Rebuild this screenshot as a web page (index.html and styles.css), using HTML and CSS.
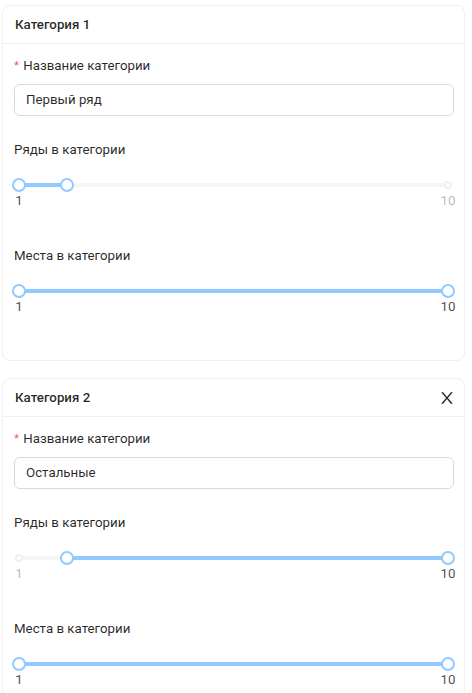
FILE: index.html
```html
<!DOCTYPE html>
<html lang="ru">
<head>
<meta charset="utf-8">
<title>Категории</title>
<link rel="stylesheet" href="styles.css">
</head>
<body>
<div class="list">
  <section class="card">
    <header class="card-head"><span class="card-title">Категория 1</span></header>
    <div class="card-body">
      <div class="form-item">
        <div class="label"><span class="req">*</span>Название категории</div>
        <div class="input">Первый ряд</div>
      </div>
      <div class="form-item">
        <div class="label">Ряды в категории</div>
        <div class="slider">
          <div class="rail"></div>
          <div class="track" style="left:0%;width:11.111%"></div>
          <span class="dot active" style="left:0%"></span>
          <span class="dot" style="left:100%"></span>
          <span class="handle" style="left:0%"></span>
          <span class="handle" style="left:11.111%"></span>
          <span class="mark active" style="left:0%">1</span>
          <span class="mark" style="left:100%">10</span>
        </div>
      </div>
      <div class="form-item">
        <div class="label">Места в категории</div>
        <div class="slider">
          <div class="rail"></div>
          <div class="track" style="left:0%;width:100%"></div>
          <span class="dot active" style="left:0%"></span>
          <span class="dot active" style="left:100%"></span>
          <span class="handle" style="left:0%"></span>
          <span class="handle" style="left:100%"></span>
          <span class="mark active" style="left:0%">1</span>
          <span class="mark active" style="left:100%">10</span>
        </div>
      </div>
    </div>
  </section>

  <section class="card">
    <header class="card-head">
      <span class="card-title">Категория 2</span>
      <button class="close" type="button" aria-label="Удалить">
        <svg viewBox="64 64 896 896" width="16" height="16" fill="currentColor"><path d="M563.8 512l262.5-312.9c4.4-5.2.7-13.1-6.1-13.1h-79.8c-4.7 0-9.2 2.1-12.3 5.7L511.6 449.8 295.1 191.7c-3-3.6-7.5-5.7-12.3-5.7H203c-6.8 0-10.5 7.9-6.1 13.1L459.4 512 196.9 824.9A7.95 7.95 0 00203 838h79.8c4.7 0 9.2-2.1 12.3-5.7l216.5-258.1 216.5 258.1c3 3.6 7.5 5.7 12.3 5.7h79.8c6.8 0 10.5-7.9 6.1-13.1L563.8 512z"/></svg>
      </button>
    </header>
    <div class="card-body">
      <div class="form-item">
        <div class="label"><span class="req">*</span>Название категории</div>
        <div class="input">Остальные</div>
      </div>
      <div class="form-item">
        <div class="label">Ряды в категории</div>
        <div class="slider">
          <div class="rail"></div>
          <div class="track" style="left:11.111%;width:88.889%"></div>
          <span class="dot" style="left:0%"></span>
          <span class="dot active" style="left:100%"></span>
          <span class="handle" style="left:11.111%"></span>
          <span class="handle" style="left:100%"></span>
          <span class="mark" style="left:0%">1</span>
          <span class="mark active" style="left:100%">10</span>
        </div>
      </div>
      <div class="form-item">
        <div class="label">Места в категории</div>
        <div class="slider">
          <div class="rail"></div>
          <div class="track" style="left:0%;width:100%"></div>
          <span class="dot active" style="left:0%"></span>
          <span class="dot active" style="left:100%"></span>
          <span class="handle" style="left:0%"></span>
          <span class="handle" style="left:100%"></span>
          <span class="mark active" style="left:0%">1</span>
          <span class="mark active" style="left:100%">10</span>
        </div>
      </div>
    </div>
  </section>
</div>
</body>
</html>
```

FILE: styles.css
```css
* { box-sizing: border-box; }

html, body { overflow: hidden; }

body {
  margin: 0;
  padding: 5px 0 0 2px;
  font-family: Roboto, "Liberation Sans", sans-serif;
  font-size: 13.3px;
  color: rgba(0, 0, 0, 0.85);
  background: #fff;
}

.card {
  width: 463px;
  border: 1px solid #f0f0f0;
  border-radius: 8px;
  margin-bottom: 17px;
  background: #fff;
}

.card-head {
  height: 38px;
  border-bottom: 1px solid #f0f0f0;
  padding: 0 12px;
  display: flex;
  align-items: center;
  justify-content: space-between;
}

.card-title { font-weight: 500; }

.close {
  border: 0;
  padding: 0;
  margin: 0 -3px 0 0;
  background: none;
  color: rgba(0, 0, 0, 0.85);
  display: flex;
  width: 16px;
  height: 16px;
}

.card-body { padding: 12px 10px 8px 11px; }

.form-item {
  display: flex;
  flex-direction: column;
  margin-bottom: 24px;
}

.label {
  height: 28px;
  line-height: 20px;
  padding-bottom: 8px;
}

.req {
  color: #ff4d4f;
  margin-right: 4px;
  font-family: "Liberation Sans", sans-serif;
}

.input {
  height: 32px;
  border: 1px solid #d9d9d9;
  border-radius: 6px;
  padding: 4px 11px;
  line-height: 22px;
}

.slider {
  position: relative;
  height: 12px;
  margin: 11px 6px 31px 5px;
}

.rail {
  position: absolute;
  left: 0;
  right: 0;
  top: 4px;
  height: 4px;
  background: #f5f5f5;
  border-radius: 2px;
}

.track {
  position: absolute;
  top: 4px;
  height: 4px;
  background: #91caff;
  border-radius: 2px;
}

.dot {
  position: absolute;
  top: 2px;
  width: 8px;
  height: 8px;
  margin-left: -4px;
  border: 2px solid #f0f0f0;
  border-radius: 50%;
  background: #fff;
}

.dot.active { border-color: #91caff; }

.handle {
  position: absolute;
  top: -1px;
  width: 14px;
  height: 14px;
  margin-left: -7px;
  border: 2px solid #91caff;
  border-radius: 50%;
  background: #fff;
}

.mark {
  position: absolute;
  top: 11px;
  transform: translateX(-50%);
  line-height: 22px;
  color: rgba(0, 0, 0, 0.3);
}

.mark.active { color: rgba(0, 0, 0, 0.72); }
```
